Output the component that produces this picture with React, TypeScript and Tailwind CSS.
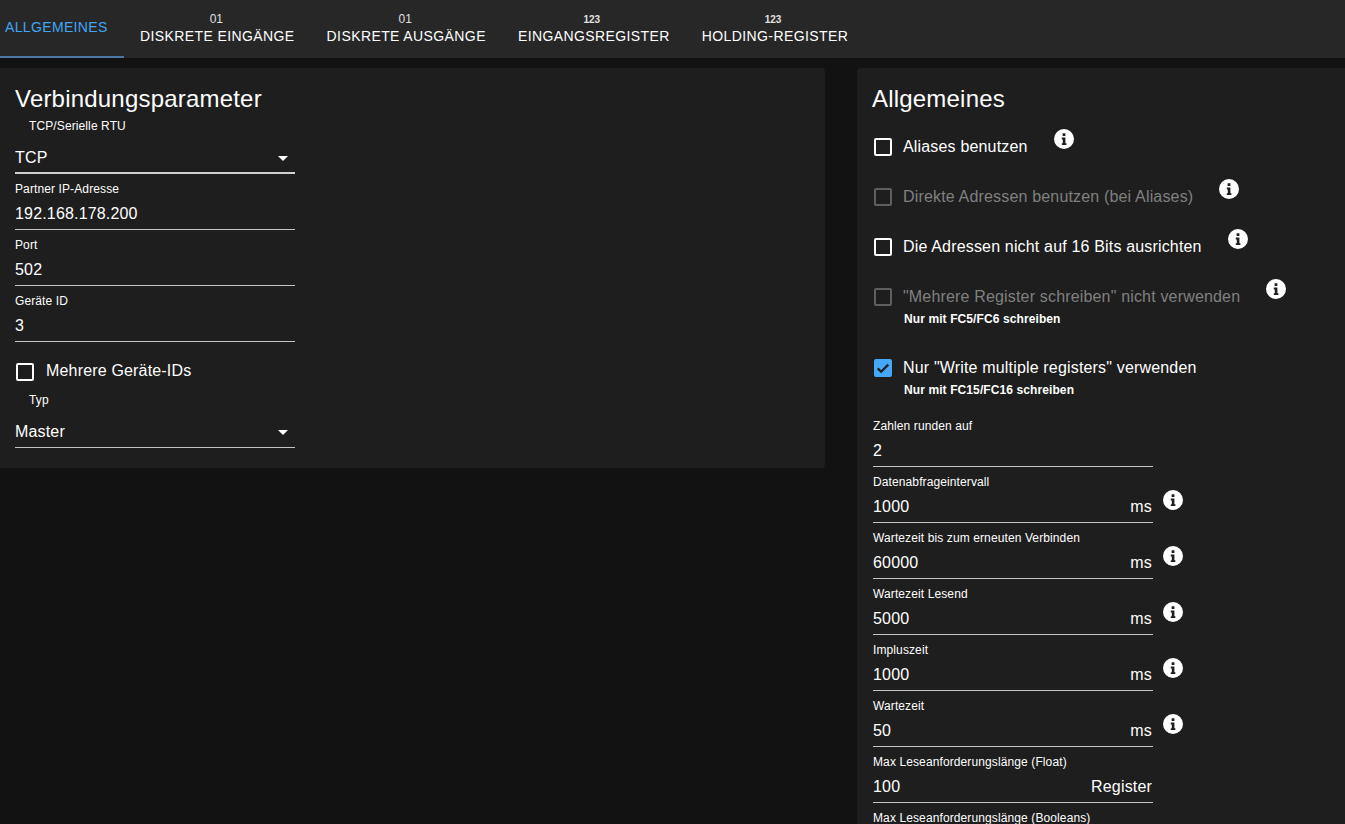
function InfoIcon() {
  return (
    <svg viewBox="0 0 24 24" className="h-6 w-6 shrink-0 fill-white">
      <path fillRule="evenodd" d="M12 2a10 10 0 1 0 0 20 10 10 0 0 0 0-20zM10.6 6.2h2.8V9h-2.8zM9.8 10.6h3.6v5.6h1V18H9.8v-1.8h1v-3.8h-1z" />
    </svg>
  )
}

function Checkbox({ checked, disabled }: { checked?: boolean; disabled?: boolean }) {
  if (checked) {
    return (
      <span className="flex h-[18px] w-[18px] shrink-0 items-center justify-center rounded-[2px] bg-[#45a7f8]">
        <svg viewBox="0 0 24 24" className="h-[18px] w-[18px] fill-none stroke-[#1e1e1e] stroke-[3]">
          <path d="M5 12.5l4.5 4.5L19 7.5" />
        </svg>
      </span>
    )
  }
  return (
    <span className={`h-[18px] w-[18px] shrink-0 rounded-[2px] border-2 ${disabled ? 'border-[#5f5f5f]' : 'border-white'}`} />
  )
}

function TextField({ label, value, unit, info }: { label: string; value: string; unit?: string; info?: boolean }) {
  return (
    <div className="flex items-start">
      <div className="h-14 w-[280px] border-b border-[#c4c4c4] pt-2">
        <div className="text-xs leading-[14px] tracking-[0.11px] text-white">{label}</div>
        <div className="flex h-[33px] items-center justify-between pr-px pt-[3px] text-base text-white">
          <span>{value}</span>
          {unit && <span>{unit}</span>}
        </div>
      </div>
      {info && <div className="ml-2 mt-[21px]"><InfoIcon /></div>}
    </div>
  )
}

function SelectField({ label, value, thick, className }: { label: string; value: string; thick?: boolean; className?: string }) {
  return (
    <div className={`w-[280px] pt-[5px] ${thick ? 'border-b-2 border-[#d0d0d0]' : 'border-b border-[#c4c4c4]'} ${className ?? ''}`}>
      <div className="pl-[14px] text-xs leading-[14px] tracking-[0.11px] text-white">{label}</div>
      <div className="mt-[11px] flex h-7 items-center justify-between text-base text-white">
        <span>{value}</span>
        <span className="mr-[7px] h-0 w-0 border-x-[5px] border-t-[5px] border-x-transparent border-t-white" />
      </div>
    </div>
  )
}

function CheckRow({ label, hint, checked, disabled, info, className }: { label: string; hint?: string; checked?: boolean; disabled?: boolean; info?: boolean; className?: string }) {
  return (
    <div className={className}>
      <div className="flex h-[50px] items-start">
        <div className="flex h-[50px] items-center pl-[2px]">
          <Checkbox checked={checked} disabled={disabled} />
          <span className={`ml-[11px] text-base ${disabled ? 'text-[#808080]' : 'text-white'}`}>{label}</span>
        </div>
        {info && <div className="ml-6 mt-[5px]"><InfoIcon /></div>}
      </div>
      {hint && <div className="-mt-[10px] pl-8 text-xs font-bold leading-[14px] tracking-[0.1px] text-white">{hint}</div>}
    </div>
  )
}

function Tab({ top, label, topClass }: { top: string; label: string; topClass: string }) {
  return (
    <div className="flex flex-col items-center px-4 pt-[14px]">
      <span className={`-mt-px leading-3 ${topClass}`}>{top}</span>
      <span className="mt-px text-sm leading-[20px] tracking-[0.4px] text-white">{label}</span>
    </div>
  )
}

export default function App() {
  return (
    <div className="h-[824px] overflow-hidden bg-[#121212] font-[Liberation_Sans] tracking-[0.17px]">
      <div className="flex h-[58px] bg-[#272727]">
        <div className="flex w-[124px] items-center border-b-2 border-[#4a76a8] pb-[2px] pl-[5px] text-sm tracking-[0.35px] text-[#42a5f5]">ALLGEMEINES</div>
        <Tab top="01" label="DISKRETE EINGÄNGE" topClass="-translate-x-px text-xs tracking-normal text-[#e0e0e0]" />
        <Tab top="01" label="DISKRETE AUSGÄNGE" topClass="-translate-x-px text-xs tracking-normal text-[#e0e0e0]" />
        <Tab top="123" label="EINGANGSREGISTER" topClass="-translate-x-[2px] translate-y-px text-[10px] font-bold tracking-normal text-[#e0e0e0]" />
        <Tab top="123" label="HOLDING-REGISTER" topClass="-translate-x-[2px] translate-y-px text-[10px] font-bold tracking-normal text-[#e0e0e0]" />
      </div>

      <div className="mt-[10px] flex items-start justify-between">
        <section className="h-[400px] w-[825px] rounded-r bg-[#1e1e1e] pl-[15px] pt-[14px]">
          <h2 className="h-8 pt-px text-2xl leading-8 tracking-[0.2px] text-white">Verbindungsparameter</h2>
          <SelectField label="TCP/Serielle RTU" value="TCP" thick />
          <TextField label="Partner IP-Adresse" value="192.168.178.200" />
          <TextField label="Port" value="502" />
          <TextField label="Geräte ID" value="3" />
          <div className="flex h-[46px] items-start pl-px pt-[15px]">
            <div className="flex h-[30px] items-center">
              <Checkbox />
              <span className="ml-3 -translate-y-px text-base text-white">Mehrere Geräte-IDs</span>
            </div>
          </div>
          <SelectField label="Typ" value="Master" className="pb-px" />
        </section>

        <section className="h-[800px] w-[488px] rounded-l bg-[#1e1e1e] pl-[15px] pt-[14px]">
          <h2 className="h-8 pt-px text-2xl leading-8 tracking-[0.2px] text-white">Allgemeines</h2>
          <div className="pt-2">
            <CheckRow label="Aliases benutzen" info />
            <CheckRow label="Direkte Adressen benutzen (bei Aliases)" disabled info />
            <CheckRow label="Die Adressen nicht auf 16 Bits ausrichten" info />
            <CheckRow label={'"Mehrere Register schreiben" nicht verwenden'} hint="Nur mit FC5/FC6 schreiben" disabled info />
            <CheckRow label={'Nur "Write multiple registers" verwenden'} hint="Nur mit FC15/FC16 schreiben" checked className="mt-[17px]" />
          </div>
          <div className="mt-[14px] pl-px">
            <TextField label="Zahlen runden auf" value="2" />
            <TextField label="Datenabfrageintervall" value="1000" unit="ms" info />
            <TextField label="Wartezeit bis zum erneuten Verbinden" value="60000" unit="ms" info />
            <TextField label="Wartezeit Lesend" value="5000" unit="ms" info />
            <TextField label="Impluszeit" value="1000" unit="ms" info />
            <TextField label="Wartezeit" value="50" unit="ms" info />
            <TextField label="Max Leseanforderungslänge (Float)" value="100" unit="Register" />
            <TextField label="Max Leseanforderungslänge (Booleans)" value="100" unit="Register" />
          </div>
        </section>
      </div>
    </div>
  )
}
